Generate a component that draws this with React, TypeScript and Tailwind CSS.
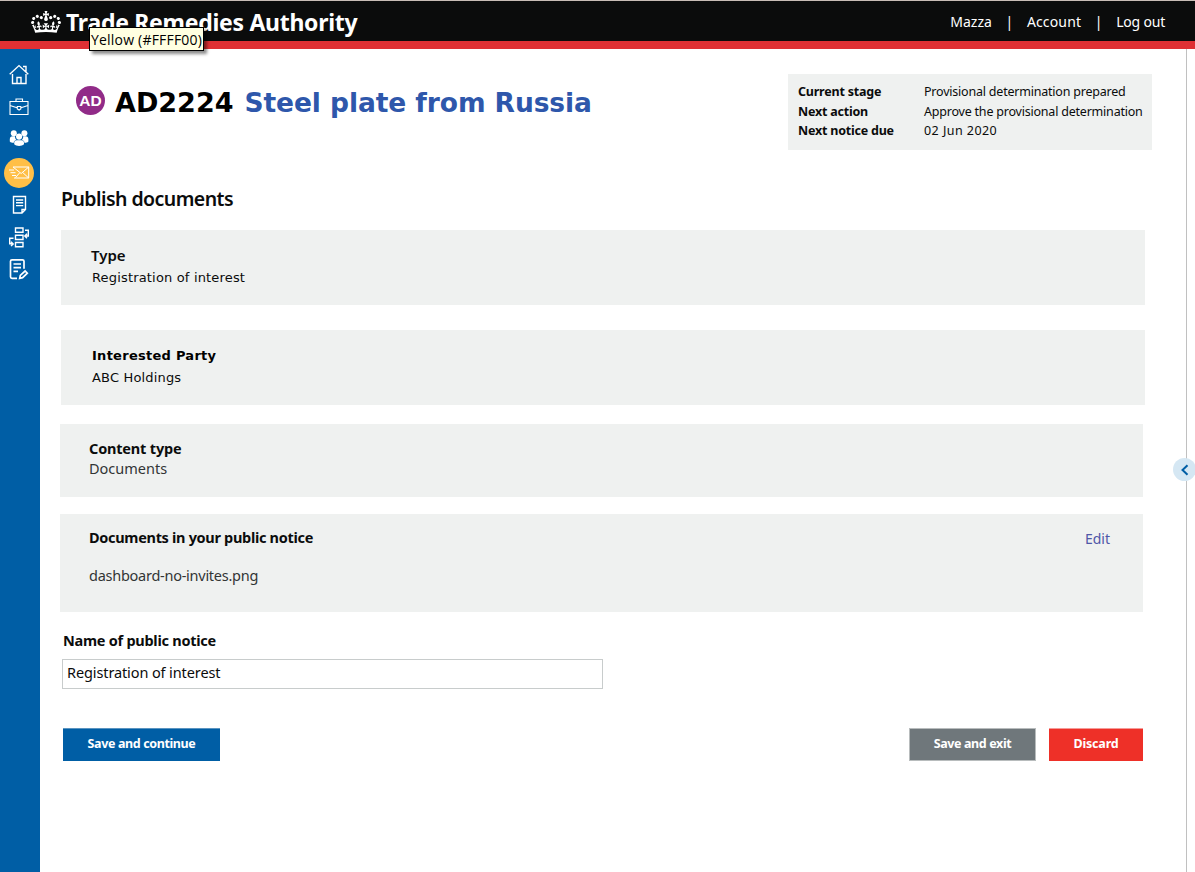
import React from 'react';

const crown =
  'M25 30.2c3.5 1.5 7.7-.2 9.1-3.7 1.5-3.6-.2-7.8-3.9-9.2-3.6-1.4-7.6.3-9.1 3.9-1.4 3.5.3 7.5 3.9 9zM9 39.5c3.6 1.5 7.8-.2 9.2-3.7 1.5-3.6-.2-7.8-3.9-9.1-3.6-1.5-7.6.2-9.1 3.8-1.4 3.5.3 7.5 3.8 9zM4.4 57.2c3.5 1.5 7.7-.2 9.1-3.8 1.5-3.6-.2-7.7-3.9-9.1-3.5-1.5-7.6.3-9.1 3.8-1.4 3.5.3 7.6 3.9 9.1zm38.3-21.4c3.5 1.5 7.7-.2 9.1-3.8 1.5-3.6-.2-7.7-3.9-9.1-3.6-1.5-7.6.3-9.1 3.8-1.3 3.6.4 7.7 3.9 9.1zm64.4-5.6c-3.6 1.5-7.8-.2-9.1-3.7-1.5-3.6.2-7.8 3.8-9.2 3.6-1.4 7.7.3 9.2 3.9 1.3 3.5-.4 7.5-3.9 9zm15.9 9.3c-3.6 1.5-7.7-.2-9.1-3.7-1.5-3.6.2-7.8 3.7-9.1 3.6-1.5 7.7.2 9.2 3.8 1.5 3.5-.3 7.5-3.8 9zm4.7 17.7c-3.6 1.5-7.8-.2-9.2-3.8-1.5-3.6.2-7.7 3.9-9.1 3.6-1.5 7.7.3 9.2 3.8 1.3 3.5-.4 7.6-3.9 9.1zM89.3 35.8c-3.6 1.5-7.8-.2-9.2-3.8-1.4-3.6.2-7.7 3.9-9.1 3.6-1.5 7.7.3 9.2 3.8 1.4 3.6-.3 7.7-3.9 9.1zM69.7 17.7l8.9 4.7V9.3l-8.9 2.8c-.2-.3-.5-.6-.9-.9L72.4 0H59.6l3.5 11.2c-.3.3-.6.5-.9.9l-8.8-2.8v13.1l8.8-4.7c.3.3.6.7.9.9l-5 15.4v.1c-.2.8-.4 1.6-.4 2.4 0 4.1 3.1 7.5 7 8.1h.2c.3 0 .7.1 1 .1.4 0 .7 0 1-.1h.2c4-.6 7.1-4.1 7.1-8.1 0-.8-.1-1.7-.4-2.4V34l-5.1-15.4c.4-.2.7-.6 1-.9zM66 92.8c16.9 0 32.8 1.1 47.1 3.2 4-16.9 8.9-26.7 14-33.5l-9.6-3.4c1 4.9 1.1 7.2 0 10.2-1.5-1.4-3-4.3-4.2-8.7L108.6 76c2.8-2 5-3.2 7.5-3.3-4.4 9.4-10 11.9-13.6 11.2-4.3-.8-6.3-4.6-5.6-7.9 1-4.7 5.7-5.9 8-.5 4.3-8.7-3-11.4-7.6-8.8 7.1-7.2 7.9-13.5 2.1-21.1-8 6.1-8.1 12.3-4.5 20.8-4.7-5.4-12.1-2.5-9.5 6.2 3.4-5.2 7.9-2 7.2 3.1-.6 4.3-6.4 7.8-13.5 7.2-10.3-.9-10.9-8-11.2-13.8 2.5-.5 7.1 1.8 11 7.3L80.2 60c-4.1 4.4-8 5.3-12.3 5.4 1.4-4.4 8-11.6 8-11.6H55.5s6.4 7.2 7.9 11.6c-4.2-.1-8-1-12.3-5.4l1.4 16.4c3.9-5.5 8.5-7.7 10.9-7.3-.3 5.8-.9 12.8-11.1 13.8-7.2.6-12.9-2.9-13.5-7.2-.7-5 3.8-8.3 7.1-3.1 2.7-8.7-4.6-11.6-9.4-6.2 3.7-8.5 3.6-14.7-4.6-20.8-5.8 7.6-5 13.9 2.2 21.1-4.7-2.6-11.9.1-7.7 8.8 2.3-5.5 7.1-4.2 8.1.5.7 3.3-1.3 7.1-5.7 7.9-3.5.7-9-1.8-13.5-11.2 2.5.1 4.7 1.3 7.5 3.3l-4.7-15.4c-1.2 4.4-2.7 7.2-4.3 8.7-1.1-3-.9-5.3 0-10.2l-9.5 3.4c5 6.9 9.9 16.7 14 33.5 14.8-2.1 30.8-3.2 47.7-3.2z';

function Sidebar() {
  const stroke = { fill: 'none', stroke: '#fff', strokeWidth: 1.4 };
  return (
    <nav className="flex w-10 shrink-0 flex-col bg-[#005ea5] pt-[9px]">
      <svg className="h-8 w-10 shrink-0" viewBox="0 58 40 32" {...stroke}>
        <path d="M9.700 74.300 19 65.600l9.300 8.700M23 66.500h3v5.500M12.500 74v9.500h13.500V74M17 83.500v-6h4v6" />
      </svg>
      <svg className="h-8 w-10 shrink-0" viewBox="0 90 40 32" {...stroke} strokeWidth={1.100}>
        <path d="M10 101.500h18v13H10zM16 101.500v-2.500h6.500v2.500M10 105.500l7 2.200M28 105.500l-7 2.200M17.300 106.500h3.500v2.500l-1.700 1-1.800-1z" />
      </svg>
      <svg className="h-8 w-10 shrink-0" viewBox="0 122 40 32" fill="#fff">
        <circle cx="13.800" cy="133.200" r="3" />
        <circle cx="24.400" cy="133.200" r="3" />
        <path d="M9.800 141.500v-2.300c0-1.900 1-3 3-3h2.200c0 1.900.4 2.900 1.500 3.700-1.700.3-2.700 1.200-2.900 3-1.700 0-2.800-.4-3.800-1.400zM28.400 141.500v-2.300c0-1.900-1-3-3-3h-2.200c0 1.900-.4 2.900-1.500 3.700 1.700.3 2.700 1.200 2.900 3 1.700 0 2.800-.4 3.800-1.400z" />
        <circle cx="19.100" cy="136.600" r="3.100" />
        <path d="M14.200 144.200v-1.200c0-1.900 1-2.800 2.800-2.800h4.200c1.800 0 2.800.9 2.800 2.800v1.200c-1.200 1.200-2.900 1.700-4.900 1.700s-3.700-.5-4.900-1.700z" />
      </svg>
      <svg className="h-[34px] w-10 shrink-0" viewBox="0 154 40 34" {...stroke} strokeWidth={1}>
        <circle cx="19" cy="173" r="15" fill="#ffbf47" stroke="none" />
        <path d="M13 167h15.700v11H14M13 167l8.200 6.500 7.500-6.500M28.700 178l-6-5.500M15.500 177.500l4-4.500M9 170h5M10.500 172.700h5M12 175.500h4" />
      </svg>
      <svg className="h-8 w-10 shrink-0" viewBox="0 188 40 32" {...stroke}>
        <path d="M13.500 196.500h12v13l-3.500 3.500h-8.500zM25.500 209.500H22v3.500M16 200h7.200M16 202.800h7.200M16 205.600h7.200" />
      </svg>
      <svg className="h-[33px] w-10 shrink-0" viewBox="0 220 40 33" {...stroke}>
        <path d="M15.500 228h7.500v4.200h-7.500zM15.500 235.300h7.500v4.200h-7.500zM15.500 242.500h7.500v4.200h-7.500zM25 230.300h3.300v5.700h-3M27 233.800l-2.200 2.200 2.200 2.200M13.500 238.200H9.700v5.500h3M11 241.700l2.200 2.200-2.200 2.200" />
      </svg>
      <svg className="h-8 w-10 shrink-0" viewBox="0 253 40 32" {...stroke} strokeWidth={1.700}>
        <path d="M17 278.300h-5c-1 0-1.500-.5-1.500-1.500v-15.500c0-1 .5-1.500 1.500-1.500h10.500c1 0 1.500.5 1.500 1.500v7.500M13.500 264h7.500M13.500 267.700h7.500M13.500 271.300h4.500M19.700 278.300l.6-2.900 4.800-4.400 2.200 2.200-4.700 4.500z" />
      </svg>
    </nav>
  );
}

export default function App() {
  return (
    <div className="flex h-[872px] w-[1195px] flex-col overflow-hidden bg-white font-['Noto_Sans',sans-serif] text-[#0b0c0c]">
      <header className="relative flex h-[49px] shrink-0 items-start justify-between border-t border-b-8 border-t-[#c8bdb6] border-b-[#df3034] bg-[#0b0c0c] text-white">
        <div className="flex pt-[9px] pl-[31px]">
          <svg className="mt-px h-[22px] w-[30px]" viewBox="0 0 132 97" fill="#fff">
            <path d={crown} />
          </svg>
          <span className="ml-[5px] text-[23px] leading-[24px] font-bold tracking-[-0.28px] whitespace-nowrap">Trade Remedies Authority</span>
        </div>
        <div className="flex pt-[11px] pr-[30px] text-[14px] leading-[20px]">
          <span>Mazza</span>
          <span className="w-[35px] text-center">|</span>
          <span className="tracking-[0.15px]">Account</span>
          <span className="w-[35px] text-center">|</span>
          <span className="tracking-[-0.2px]">Log out</span>
        </div>
        <div className="absolute top-[26px] left-[89px] z-10 h-6 w-[115px] border border-black bg-[#ffffe1] pl-px font-['Open_Sans',sans-serif] text-[14px] leading-[23px] tracking-[0.2px] whitespace-nowrap text-black shadow-[3px_3px_3px_rgba(0,0,0,0.45)]">
          Yellow (#FFFF00)
        </div>
      </header>
      <div className="flex min-h-0 flex-1">
        <Sidebar />
        <main className="w-[1146px] shrink-0 pl-5">
          <div className="flex justify-between pt-[25px] pr-[34px]">
            <h1 className="flex pl-4 font-['DejaVu_Sans',sans-serif] text-[27px] leading-8 font-bold whitespace-nowrap">
              <span className="mt-[12px] flex h-[29px] w-[29px] items-center justify-center rounded-full bg-[#912b88] font-['Liberation_Sans',sans-serif] text-[15.500px] text-white">
                AD
              </span>
              <span className="mt-[13px] ml-[10px] text-black">AD2224</span>
              <span className="mt-[13px] ml-[11px] text-[26.500px] tracking-[-0.08px] text-[#2e57ab]">Steel plate from Russia</span>
            </h1>
            <dl className="grid h-[76px] w-[364px] grid-cols-[126px_1fr] content-start bg-[#eff1f0] pt-2 pl-[10px] text-[12.500px] leading-[19.500px] tracking-[-0.21px] whitespace-nowrap">
              <dt className="font-bold">Current stage</dt>
              <dd>Provisional determination prepared</dd>
              <dt className="font-bold">Next action</dt>
              <dd>Approve the provisional determination</dd>
              <dt className="font-bold">Next notice due</dt>
              <dd className="tracking-[0.45px]">02 Jun 2020</dd>
            </dl>
          </div>
          <h2 className="mt-[36px] ml-px h-[26px] text-[19.500px] leading-[26px] font-semibold tracking-[-0.55px]">Publish documents</h2>
          <section className="mt-[18px] ml-px h-[75px] w-[1084px] bg-[#eff1f0] pt-[15px] pl-[30px]">
            <h3 className="text-[15px] leading-[21px] font-semibold">Type</h3>
            <p className="pt-px pl-px font-['DejaVu_Sans',sans-serif] text-[13px] leading-[22px] tracking-[0.17px]">Registration of interest</p>
          </section>
          <section className="mt-[25px] ml-px h-[75px] w-[1084px] bg-[#eff1f0] pt-[15px] pl-[31px] font-['DejaVu_Sans',sans-serif] text-[13px]">
            <h3 className="leading-[21px] font-bold tracking-[0.27px] text-black">Interested Party</h3>
            <p className="pt-px leading-[22px] tracking-[0.17px]">ABC Holdings</p>
          </section>
          <section className="mt-[19px] h-[73px] w-[1083px] bg-[#eff1f0] pt-[14px] pl-[29px] text-[14.500px] leading-5">
            <h3 className="font-bold tracking-[-0.18px]">Content type</h3>
            <p className="text-[#323535]">Documents</p>
          </section>
          <section className="mt-[17px] flex h-[98px] w-[1083px] justify-between bg-[#eff1f0] pt-[13px] pr-[33px] pl-[29px] text-[14.500px] leading-5">
            <div>
              <h3 className="font-bold tracking-[-0.31px]">Documents in your public notice</h3>
              <p className="mt-[18px] tracking-[-0.26px] text-[#323535]">dashboard-no-invites.png</p>
            </div>
            <a className="pt-[2px] text-[14px] text-[#4f57a8]">Edit</a>
          </section>
          <label className="mt-[18px] ml-[3px] block text-[14.500px] leading-5 font-bold tracking-[-0.26px]">Name of public notice</label>
          <div className="mt-[9px] ml-[2px] h-[30px] w-[541px] border border-[#c8cccc] pl-1 text-[14.500px] leading-[24px] tracking-[-0.11px]">Registration of interest</div>
          <div className="mt-[39px] ml-[3px] flex w-[1080px] text-[12.500px] leading-[29px] font-bold tracking-[-0.38px] text-white">
            <button className="flex h-[33px] w-[157px] justify-center border-t border-[#5a94c0] bg-[#005ea5]">Save and continue</button>
            <button className="ml-auto flex h-[33px] w-[127px] justify-center border border-[#b8bcbd] bg-[#6f777b]">Save and exit</button>
            <button className="ml-[13px] flex h-[33px] w-[94px] justify-center border-t border-[#f59a98] bg-[#ee3028] tracking-[-0.16px]">Discard</button>
          </div>
        </main>
        <aside className="relative flex-1 border-l border-[#c0c0c0]">
          <div className="absolute top-[409px] -left-[14px] flex h-[23px] w-[23px] items-center justify-center rounded-full bg-[#d5e7f3]">
            <svg className="h-3 w-3" viewBox="0 0 12 12" fill="none" stroke="#005ea5" strokeWidth="2">
              <path d="M8.500 1.200 3.500 6l5 4.800" />
            </svg>
          </div>
        </aside>
      </div>
    </div>
  );
}
